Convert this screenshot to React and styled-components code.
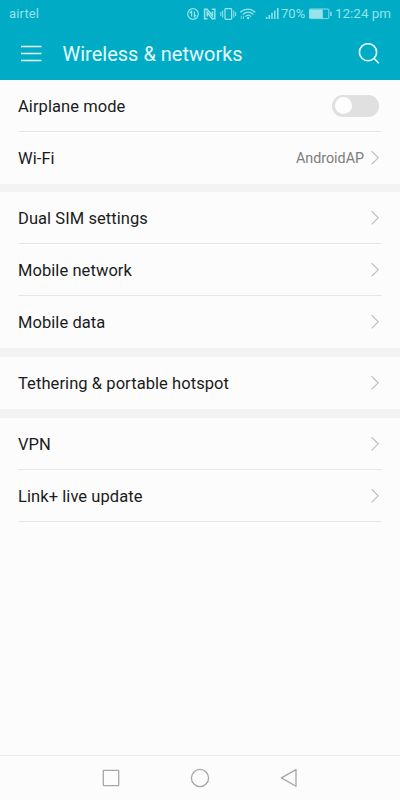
import React from "react";
import styled, { createGlobalStyle } from "styled-components";

const GlobalStyle = createGlobalStyle`
  body {
    margin: 0;
    background: #fcfcfc;
    font-family: Roboto, "Liberation Sans", sans-serif;
  }
`;

const Screen = styled.div`
  width: 400px;
  height: 800px;
  display: flex;
  flex-direction: column;
  background: #fcfcfc;
  overflow: hidden;
`;

/* ===== Header ===== */
const Header = styled.header`
  height: 80px;
  flex-shrink: 0;
  background: #00acc5;
`;

const StatusBar = styled.div`
  height: 28px;
  padding: 0 9px;
  display: flex;
  align-items: center;
  justify-content: space-between;
  color: #96e3ec;
  font-size: 13px;
  line-height: 28px;
`;

const StatusIcons = styled.div`
  display: flex;
  align-items: center;
`;

const StatusText = styled.span`
  width: ${(props) => props.width || "auto"};
  font-size: ${(props) => props.size || "13px"};
  letter-spacing: ${(props) => props.spacing || "0"};
  line-height: 28px;
  white-space: nowrap;
`;

const StatusSvg = styled.svg`
  display: block;
  flex-shrink: 0;
  fill: none;
  stroke: currentColor;
`;

const TitleBar = styled.div`
  height: 52px;
  padding: 0 20px 0 21px;
  display: flex;
  align-items: center;
  color: #e4fbfd;
`;

const Title = styled.h1`
  flex: 1;
  margin: 0 0 0 20.5px;
  font-size: 20px;
  font-weight: 400;
  line-height: 53px;
`;

/* ===== List ===== */
const List = styled.main`
  flex: 1;
`;

const Group = styled.section`
  border-top: ${(props) => props.$gap}px solid #f3f3f3;
`;

const Row = styled.div`
  height: 52px;
  box-sizing: border-box;
  margin: 0 18px;
  padding-right: 3px;
  display: flex;
  align-items: center;
  border-bottom: 1px solid
    ${(props) => (props.$divider ? "#e6e6e6" : "transparent")};
`;

const Label = styled.span`
  flex: 1;
  padding-top: 1px;
  color: #1b1b1b;
  font-size: 16.5px;
  letter-spacing: 0.07px;
  line-height: 51px;
`;

const Value = styled.span`
  margin-right: 7px;
  padding-top: 1px;
  color: #7d7d7d;
  font-size: 14.3px;
`;

const Switch = styled.div`
  width: 47px;
  height: 22px;
  box-sizing: border-box;
  padding: 2.5px;
  border-radius: 11px;
  background: #e0e0e0;
`;

const Thumb = styled.div`
  width: 17px;
  height: 17px;
  border-radius: 50%;
  background: #fefefe;
`;

/* ===== Navigation ===== */
const NavBar = styled.nav`
  height: 45px;
  box-sizing: border-box;
  flex-shrink: 0;
  padding: 0 101px;
  display: flex;
  align-items: center;
  justify-content: space-between;
  border-top: 1px solid #ececec;
`;

const groups = [
  {
    gap: 0,
    rows: [
      { label: "Airplane mode", toggle: true, divider: true },
      { label: "Wi-Fi", value: "AndroidAP" },
    ],
  },
  {
    gap: 8,
    rows: [
      { label: "Dual SIM settings", divider: true },
      { label: "Mobile network", divider: true },
      { label: "Mobile data" },
    ],
  },
  {
    gap: 9,
    rows: [{ label: "Tethering & portable hotspot" }],
  },
  {
    gap: 9,
    rows: [
      { label: "VPN", divider: true },
      { label: "Link+ live update", divider: true },
    ],
  },
];

const Chevron = () => (
  <svg width="8" height="16" fill="none" stroke="#bcbcbc" strokeWidth="1.2">
    <path d="M0.6 1.2 L7.2 7.8 L0.6 14.4" />
  </svg>
);

const StatusDrawing = () => (
  <StatusSvg width="94" height="16" viewBox="187 6 94 16">
    {/* data saver */}
    <circle cx="193" cy="14" r="5.3" strokeWidth="1.2" />
    <path d="M191.6 16.5 V11.3 L189.8 13.2 M194.4 11.5 V16.7 L196.2 14.8" strokeWidth="1.2" />
    {/* nfc */}
    <path d="M207.5 18.7 H204.6 V9.3 H207.2 L212.4 15.8 V11.5" strokeWidth="1.5" />
    <path d="M211.8 9.3 H214.8 V18.7 H212.2 L207.2 12.2 V16.5" strokeWidth="1.5" />
    {/* vibrate */}
    <rect x="225" y="8.7" width="6.6" height="10.6" rx="0.8" strokeWidth="1.3" />
    <path d="M222.7 10.5 V17.5 M220.8 12 V16 M233.8 10.5 V17.5 M235.7 12 V16" strokeWidth="1" />
    {/* wifi */}
    <path d="M240.2 12.2 Q248 6 255.2 12.2 M242.8 14.4 Q248.3 9.8 253.3 14.4 M245.4 16.5 Q248.4 13.8 251 16.5" strokeWidth="1.3" />
    <circle cx="248.2" cy="18" r="1.2" fill="currentColor" stroke="none" />
    <path d="M241.3 19 V15.7 M243.5 15.8 V19" strokeWidth="0.8" />
    {/* signal */}
    <path d="M266.7 17 V19 M269.3 15 V19 M272 12.8 V19 M274.8 10.4 V19 M277.8 8 V19" strokeWidth="1.5" />
  </StatusSvg>
);

const Battery = () => (
  <StatusSvg width="29" height="16" viewBox="306 6 29 16">
    <rect x="309.5" y="9" width="19.3" height="9.6" rx="0.7" strokeWidth="0.9" />
    <rect x="310" y="9.5" width="12.8" height="8.6" fill="currentColor" stroke="none" />
    <path d="M331 11.7 V16" strokeWidth="1.4" />
  </StatusSvg>
);

const App = () => {
  return (
    <>
      <GlobalStyle />
      <Screen>
        <Header>
          <StatusBar>
            <StatusText spacing="0.15px">airtel</StatusText>
            <StatusIcons>
              <StatusDrawing />
              <StatusText width="25px">70%</StatusText>
              <Battery />
              <StatusText size="13.4px">12:24 pm</StatusText>
            </StatusIcons>
          </StatusBar>
          <TitleBar>
            <svg width="21" height="18" fill="none" stroke="currentColor" strokeWidth="1.6">
              <path d="M0 1.5 H20.5 M0 8.5 H20.5 M0 15.5 H20.5" />
            </svg>
            <Title>Wireless &amp; networks</Title>
            <svg width="22" height="22" fill="none" stroke="currentColor" strokeWidth="1.6">
              <circle cx="10" cy="9.2" r="8.6" />
              <path d="M16 15.3 L20.8 20.3" />
            </svg>
          </TitleBar>
        </Header>

        <List>
          {groups.map((group, index) => (
            <Group key={index} $gap={group.gap}>
              {group.rows.map((row) => (
                <Row key={row.label} $divider={row.divider}>
                  <Label>{row.label}</Label>
                  {row.value && <Value>{row.value}</Value>}
                  {row.toggle ? (
                    <Switch>
                      <Thumb />
                    </Switch>
                  ) : (
                    <Chevron />
                  )}
                </Row>
              ))}
            </Group>
          ))}
        </List>

        <NavBar>
          <svg width="20" height="20" fill="none" stroke="#a6a6a6" strokeWidth="1.3">
            <rect x="2.3" y="2.3" width="15.4" height="15.4" rx="0.6" />
          </svg>
          <svg width="20" height="20" fill="none" stroke="#a6a6a6" strokeWidth="1.3">
            <circle cx="10" cy="10" r="8.6" />
          </svg>
          <svg width="20" height="20" fill="none" stroke="#a6a6a6" strokeWidth="1.3">
            <path d="M17 1.6 V18.2 L2.4 9.9 Z" strokeLinejoin="round" />
          </svg>
        </NavBar>
      </Screen>
    </>
  );
};

export default App;
